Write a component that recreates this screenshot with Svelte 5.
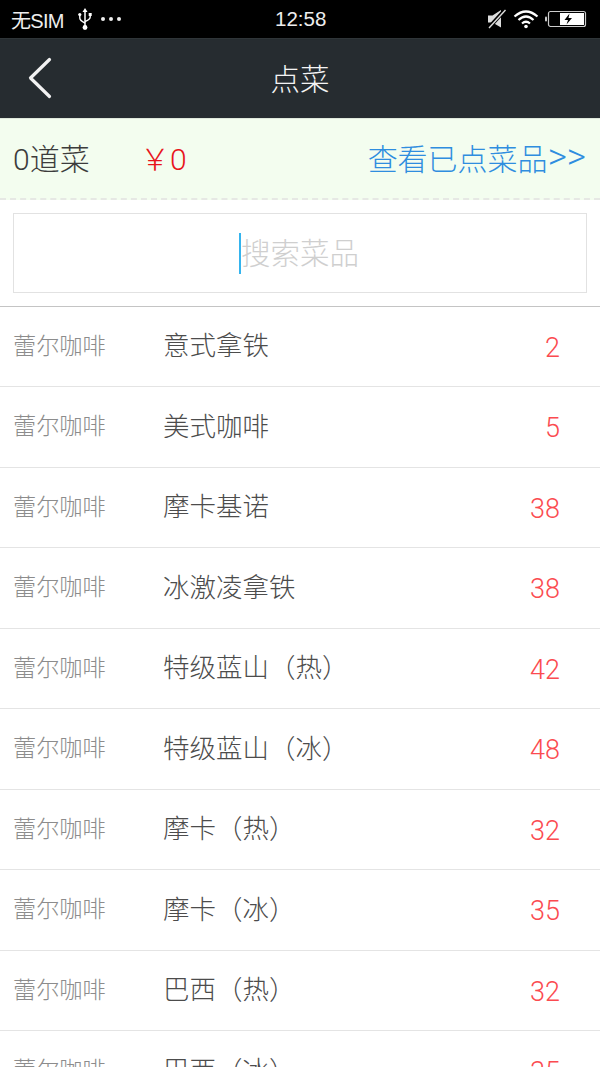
<script>
	const vendor = '蕾尔咖啡';
	const dishes = [
		{ name: '意式拿铁', price: 2 },
		{ name: '美式咖啡', price: 5 },
		{ name: '摩卡基诺', price: 38 },
		{ name: '冰激凌拿铁', price: 38 },
		{ name: '特级蓝山（热）', price: 42 },
		{ name: '特级蓝山（冰）', price: 48 },
		{ name: '摩卡（热）', price: 32 },
		{ name: '摩卡（冰）', price: 35 },
		{ name: '巴西（热）', price: 32 },
		{ name: '巴西（冰）', price: 35 }
	];
</script>

<div class="page">
	<div class="status">
		<div class="status-left">
			<span class="sim">无SIM</span>
			<svg class="usb" width="14" height="24" viewBox="0 0 14 24">
				<path d="M7 1 L9.5 5 H4.5 Z" fill="#fff" />
				<path d="M7 4 V20" stroke="#fff" stroke-width="1.5" fill="none" />
				<circle cx="7" cy="20.5" r="2.4" fill="#fff" />
				<path d="M1.8 8 V11 Q1.8 13.5 7 16" stroke="#fff" stroke-width="1.4" fill="none" />
				<path d="M12.2 8 V10 Q12.2 12.5 7 14.5" stroke="#fff" stroke-width="1.4" fill="none" />
				<circle cx="1.8" cy="7.5" r="1.6" fill="#fff" />
				<rect x="10.7" y="6" width="3" height="3" fill="#fff" />
			</svg>
			<span class="dots"><i></i><i></i><i></i></span>
		</div>
		<span class="clock">12:58</span>
		<div class="status-right">
			<svg class="mute" width="20" height="20" viewBox="0 0 20 20">
				<path d="M1 6.5 H5.5 L14 1 V18.5 L5.5 13.5 H1 Z" fill="#ddd" />
				<path d="M1.5 19 L18 1" stroke="#000" stroke-width="4" />
				<path d="M2 19 L18.5 1" stroke="#ddd" stroke-width="1.4" />
			</svg>
			<svg class="wifi" width="26" height="20" viewBox="0 0 26 20">
				<path d="M1.5 7.5 Q13 -2.5 24.5 7.5" stroke="#fff" stroke-width="2.2" fill="none" />
				<path d="M5.5 11 Q13 4 20.5 11" stroke="#fff" stroke-width="2.2" fill="none" />
				<path d="M9 14.5 Q13 11 17 14.5" stroke="#fff" stroke-width="2.2" fill="none" />
				<circle cx="13" cy="17.5" r="1.8" fill="#fff" />
			</svg>
			<svg width="42" height="18" viewBox="0 0 42 18">
				<rect x="0" y="6.5" width="2" height="5" rx="1" fill="#ccc" />
				<rect x="3.5" y="1.5" width="37" height="15" rx="2" fill="none" stroke="#ccc" stroke-width="1.2" />
				<rect x="15" y="3" width="24" height="12" fill="#fff" />
				<path d="M24.5 3.5 L19.5 10 H23 L21.5 14.5 L27 8 H23.5 Z" fill="#000" />
			</svg>
		</div>
	</div>

	<header class="nav">
		<svg class="back" width="26" height="42" viewBox="0 0 26 42">
			<path d="M22.5 2.5 L3.5 21 L22.5 39.5" stroke="#f2f2f2" stroke-width="3.2" stroke-linecap="round" stroke-linejoin="round" fill="none" />
		</svg>
		<h1>点菜</h1>
	</header>

	<section class="summary">
		<span class="count">0道菜</span>
		<span class="total">￥0</span>
		<a class="view">查看已点菜品<span class="arrows">&gt;&gt;</span></a>
	</section>

	<div class="search-wrap">
		<div class="search">
			<span class="caret"></span>
			<span class="placeholder">搜索菜品</span>
		</div>
	</div>

	<ul class="list">
		{#each dishes as dish}
			<li>
				<span class="vendor">{vendor}</span>
				<span class="name">{dish.name}</span>
				<span class="price">{dish.price}</span>
			</li>
		{/each}
	</ul>
</div>

<style>
	:global(body) {
		margin: 0;
		background: #fff;
	}

	.page {
		width: 600px;
		height: 1067px;
		overflow: hidden;
		font-family: Roboto, "Noto Sans CJK SC", sans-serif;
		font-weight: 300;
	}

	.status {
		height: 38px;
		background: #000;
		color: #eee;
		display: flex;
		align-items: center;
		justify-content: space-between;
		padding: 0 13px 0 11px;
		position: relative;
	}

	.status-left,
	.status-right {
		display: flex;
		align-items: center;
	}

	.sim {
		font-size: 20px;
		font-weight: 400;
		font-family: "Liberation Sans", "Noto Sans CJK SC", sans-serif;
		letter-spacing: -0.7px;
	}

	.usb {
		margin-left: 14px;
	}

	.dots {
		display: flex;
		gap: 4px;
		margin-left: 9px;
	}

	.dots i {
		width: 4px;
		height: 4px;
		border-radius: 50%;
		background: #eee;
	}

	.clock {
		position: absolute;
		left: 275px;
		font-family: "Liberation Sans", sans-serif;
		font-size: 20.5px;
	}

	.mute {
		margin-right: 6px;
	}

	.wifi {
		margin-right: 6px;
	}

	.nav {
		height: 80px;
		box-sizing: border-box;
		background: #262c30;
		border-top: 1px solid #2f3538;
		display: flex;
		align-items: center;
		justify-content: center;
		position: relative;
	}

	.back {
		position: absolute;
		left: 27px;
		top: 18px;
	}

	h1 {
		margin: 0 0 4px;
		color: #f4f4f4;
		font-size: 29.5px;
		font-weight: 300;
	}

	.summary {
		height: 82px;
		box-sizing: border-box;
		background: #f3fdef;
		border-top: 1px solid #dfe8dc;
		border-bottom: 2px dashed #e6e8e4;
		display: flex;
		align-items: center;
		padding: 0 14px 3px 13px;
		font-size: 30px;
	}

	.count {
		color: #3c3c3c;
		width: 127px;
	}

	.total {
		color: #e8141c;
	}

	.view {
		margin-left: auto;
		color: #2f8ddf;
		display: flex;
		align-items: center;
	}

	.arrows {
		font-size: 37px;
		line-height: 30px;
	}

	.search-wrap {
		padding: 13px 13px;
		border-bottom: 1px solid #c4c4c4;
	}

	.search {
		height: 80px;
		box-sizing: border-box;
		border: 1px solid #e2e2e2;
		display: flex;
		align-items: center;
		justify-content: center;
	}

	.caret {
		width: 2px;
		height: 41px;
		background: #35b4ee;
	}

	.placeholder {
		color: #cfcfcf;
		font-size: 29.5px;
		margin: 0 2px 4px 0;
	}

	.list {
		list-style: none;
		margin: -0.5px 0 0;
		padding: 0;
	}

	li {
		height: 80.5px;
		box-sizing: border-box;
		border-bottom: 1px solid #e4e4e4;
		display: flex;
		align-items: center;
		padding: 0 40px 0 13px;
	}

	.vendor {
		width: 150px;
		color: #8c8c8c;
		font-size: 23.2px;
		margin-bottom: 5px;
	}

	.name {
		flex: 1;
		color: #4c4c4c;
		font-size: 26.5px;
		margin-bottom: 5px;
	}

	.price {
		color: #fb4b50;
		font-size: 27px;
		margin-top: 3px;
	}
</style>
